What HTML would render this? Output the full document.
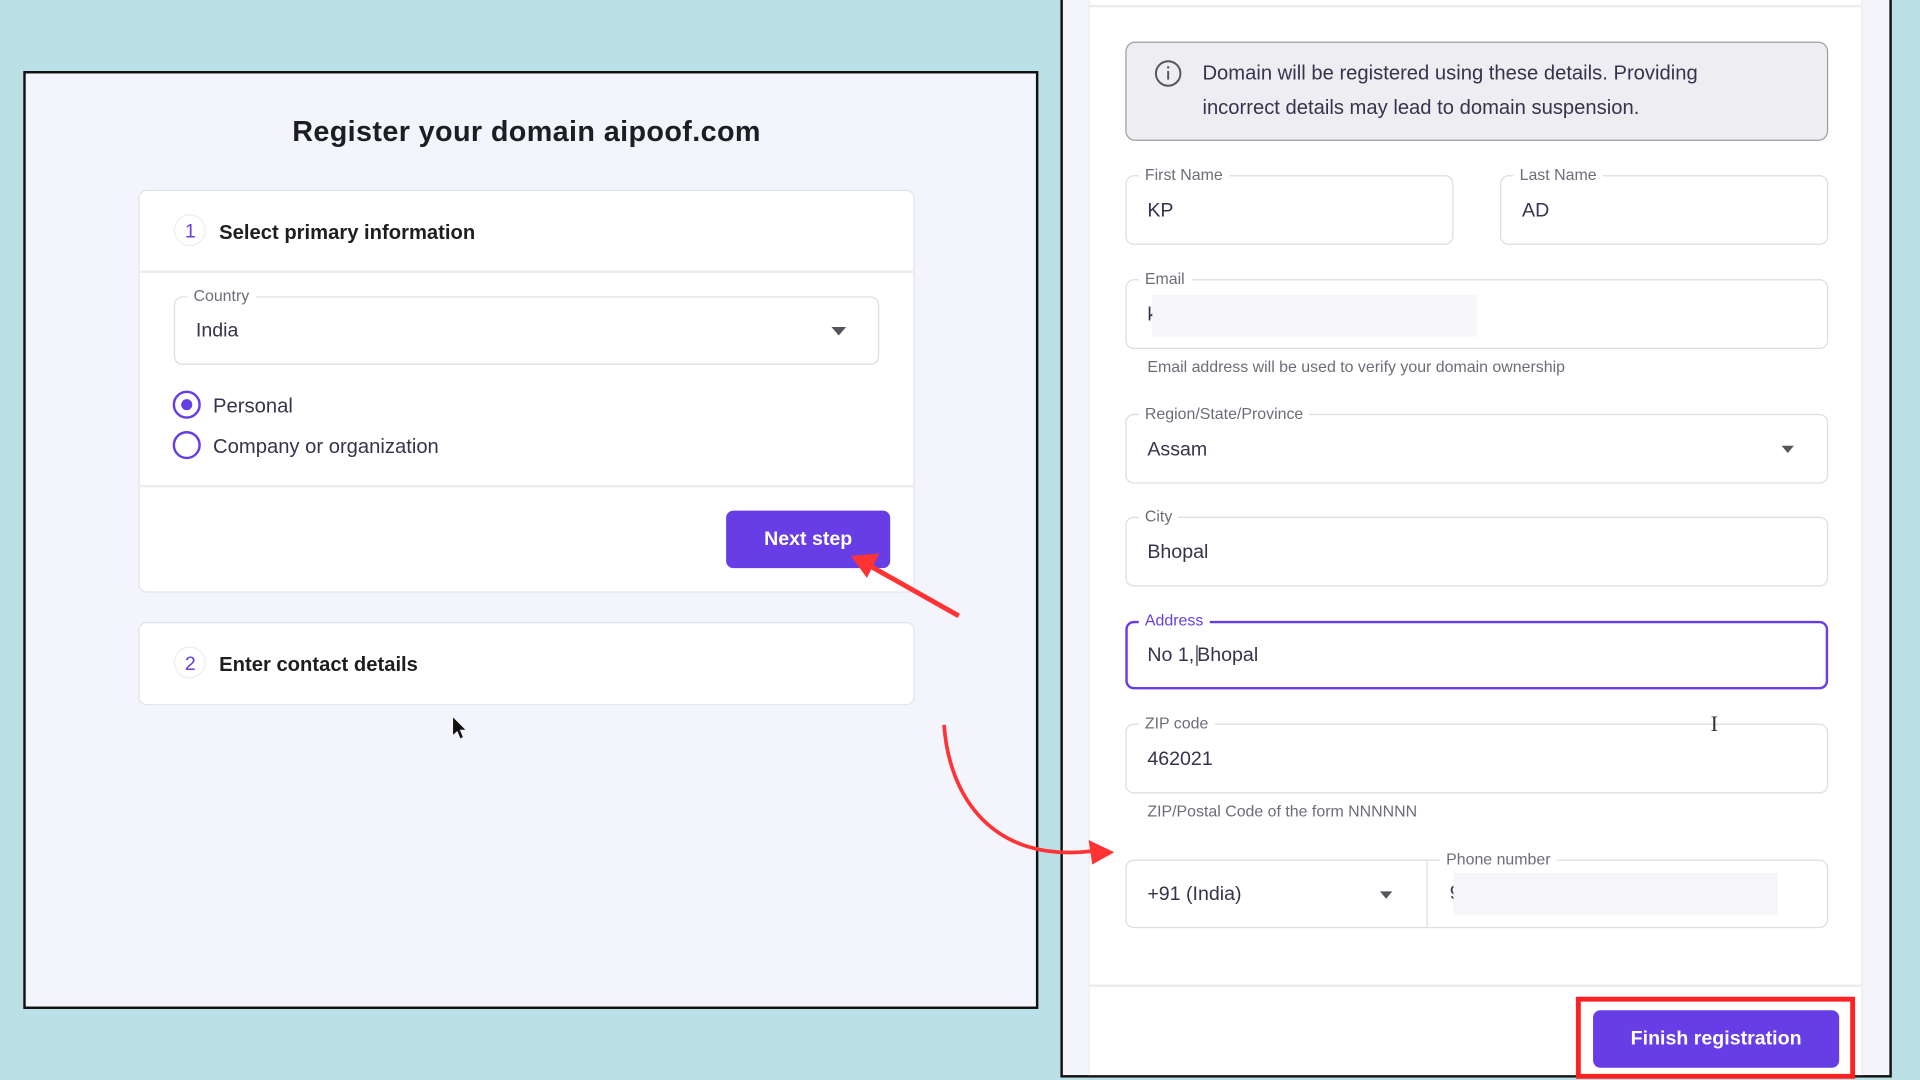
<!DOCTYPE html>
<html><head><meta charset="utf-8"><style>
html,body{margin:0;padding:0;width:1920px;height:1080px;overflow:hidden;background:#bae0e5;font-family:"Liberation Sans",sans-serif;}
#w{position:absolute;left:0;top:0;width:1568px;height:882px;transform:scale(1.22449);transform-origin:0 0;}
.a{position:absolute;box-sizing:border-box;}
.t{position:absolute;white-space:nowrap;}
.fld{position:absolute;box-sizing:border-box;border:1px solid #dcdce4;border-radius:7px;background:#fff;}
.lbl{position:absolute;top:-9px;left:10px;padding:0 5px;background:#fff;font-size:13px;color:#6d6d78;line-height:16px;}
.val{position:absolute;left:17px;top:50%;transform:translateY(-45%);font-size:16px;color:#36344d;}
.tri{position:absolute;width:0;height:0;border-left:6px solid transparent;border-right:6px solid transparent;border-top:7px solid #55555e;}
.btn{position:absolute;background:#673de6;color:#fff;font-weight:bold;font-size:16px;border-radius:6px;text-align:center;}
</style></head><body><div id="w">

<!-- Left panel -->
<div class="a" style="left:19px;top:58px;width:829px;height:766px;border:2px solid #111;background:#f4f4fd;"></div>
<div class="t" style="left:0;width:860px;top:94px;text-align:center;font-size:23.5px;font-weight:bold;color:#1d1e20;letter-spacing:0.3px;">Register your domain aipoof.com</div>

<div class="a" style="left:113px;top:155px;width:634px;height:329px;background:#fff;border:1px solid #e2e2ea;border-radius:7px;"></div>
<div class="a" style="left:113px;top:221px;width:634px;height:2px;background:#ebebf0;"></div>
<div class="a" style="left:142px;top:175px;width:26px;height:26px;border:1px solid #ececf4;border-radius:50%;"></div>
<div class="t" style="left:151px;top:181px;font-size:16px;color:#673de6;">1</div>
<div class="t" style="left:179px;top:181px;font-size:16.5px;font-weight:bold;color:#1d1e20;">Select primary information</div>

<div class="fld" style="left:142px;top:242px;width:576px;height:56px;"><div class="lbl">Country</div><div class="val">India</div><div class="tri" style="left:536px;top:24px;"></div></div>

<div class="a" style="left:141px;top:319px;width:23px;height:23px;border:2px solid #673de6;border-radius:50%;"></div>
<div class="a" style="left:148px;top:326px;width:9px;height:9px;background:#673de6;border-radius:50%;"></div>
<div class="t" style="left:174px;top:323px;font-size:16.5px;color:#36344d;">Personal</div>
<div class="a" style="left:141px;top:352px;width:23px;height:23px;border:2px solid #673de6;border-radius:50%;"></div>
<div class="t" style="left:174px;top:356px;font-size:16.5px;color:#36344d;">Company or organization</div>
<div class="a" style="left:113px;top:396px;width:634px;height:2px;background:#ebebf0;"></div>
<div class="btn" style="left:593px;top:417px;width:134px;height:47px;line-height:47px;">Next step</div>

<div class="a" style="left:113px;top:508px;width:634px;height:68px;background:#fff;border:1px solid #e2e2ea;border-radius:7px;"></div>
<div class="a" style="left:142px;top:528px;width:26px;height:26px;border:1px solid #ececf4;border-radius:50%;"></div>
<div class="t" style="left:151px;top:534px;font-size:16px;color:#673de6;">2</div>
<div class="t" style="left:179px;top:534px;font-size:16.5px;font-weight:bold;color:#1d1e20;">Enter contact details</div>

<!-- Right panel -->
<div class="a" style="left:866px;top:-4px;width:679px;height:884px;border:2px solid #111;background:#f4f4fb;"></div>
<div class="a" style="left:889px;top:0;width:632px;height:878px;background:#fff;border-left:1px solid #ececf2;border-right:1px solid #ececf2;"></div>
<div class="a" style="left:889px;top:4px;width:632px;height:2px;background:#ebebf0;"></div>
<div class="a" style="left:889px;top:804px;width:632px;height:2px;background:#ebebf0;"></div>

<div class="a" style="left:919px;top:34px;width:574px;height:81px;background:#ededf2;border:1.5px solid #9d9da6;border-radius:8px;"></div>
<svg class="a" style="left:942px;top:48px" width="24" height="24"><circle cx="12" cy="12" r="10" fill="none" stroke="#55555e" stroke-width="1.6"/><line x1="12" y1="10" x2="12" y2="17" stroke="#55555e" stroke-width="1.6"/><circle cx="12" cy="7" r="1" fill="#55555e"/></svg>
<div class="t" style="left:982px;top:46px;font-size:16.5px;color:#36344d;line-height:28px;">Domain will be registered using these details. Providing<br>incorrect details may lead to domain suspension.</div>

<div class="fld" style="left:919px;top:143px;width:268px;height:57px;"><div class="lbl">First Name</div><div class="val">KP</div></div>
<div class="fld" style="left:1225px;top:143px;width:268px;height:57px;"><div class="lbl">Last Name</div><div class="val">AD</div></div>
<div class="fld" style="left:919px;top:228px;width:574px;height:57px;"><div class="lbl">Email</div><div class="val">k</div><div class="a" style="left:21px;top:12px;width:265px;height:34px;background:#f5f5fa;"></div></div>
<div class="t" style="left:937px;top:292px;font-size:13px;color:#6d6d78;">Email address will be used to verify your domain ownership</div>
<div class="fld" style="left:919px;top:338px;width:574px;height:57px;"><div class="lbl">Region/State/Province</div><div class="val">Assam</div><div class="tri" style="left:535px;top:25px;border-left-width:5px;border-right-width:5px;border-top-width:6px;"></div></div>
<div class="fld" style="left:919px;top:422px;width:574px;height:57px;"><div class="lbl">City</div><div class="val">Bhopal</div></div>
<div class="fld" style="left:919px;top:507px;width:574px;height:56px;border:2px solid #673de6;"><div class="lbl" style="color:#673de6;top:-10px;left:9px;">Address</div><div class="val" style="left:16px;">No 1, <span style="border-left:1px solid #333;margin-left:-3px;">Bhopal</span></div></div>
<div class="fld" style="left:919px;top:591px;width:574px;height:57px;"><div class="lbl">ZIP code</div><div class="val">462021</div></div>
<div class="t" style="left:1397px;top:581px;font-size:18px;color:#333;font-family:'Liberation Serif',serif;">I</div>
<div class="t" style="left:937px;top:655px;font-size:13px;color:#6d6d78;">ZIP/Postal Code of the form NNNNNN</div>
<div class="fld" style="left:919px;top:702px;width:574px;height:56px;"><div class="val">+91 (India)</div><div class="tri" style="left:207px;top:25px;border-left-width:5px;border-right-width:5px;border-top-width:6px;"></div>
<div class="a" style="left:245px;top:0;width:1px;height:54px;background:#dcdce4;"></div>
<div class="lbl" style="left:256px;">Phone number</div><div class="t" style="left:264px;top:18px;font-size:16px;color:#36344d;">9</div><div class="a" style="left:267px;top:10px;width:265px;height:34px;background:#f5f5fa;"></div></div>

<div class="a" style="left:1287px;top:814px;width:228px;height:67px;border:4px solid #f22;"></div>
<div class="btn" style="left:1301px;top:825px;width:201px;height:47px;line-height:47px;">Finish registration</div>

<svg class="a" style="left:0;top:0" width="1568" height="882">
<path d="M370 586 L370 600 L373.5 597 L376 603 L378 602 L375.5 596 L380 596 Z" fill="#111"/>
<line x1="783" y1="503" x2="712" y2="463" stroke="#f33" stroke-width="4"/>
<path d="M695 454 L718 452 L708 472 Z" fill="#f33"/>
<path d="M771 592 C775 650 810 705 892 695" stroke="#f33" stroke-width="3" fill="none"/>
<path d="M910 696 L889 686 L892 706 Z" fill="#f33"/>
</svg>

</div></body></html>
